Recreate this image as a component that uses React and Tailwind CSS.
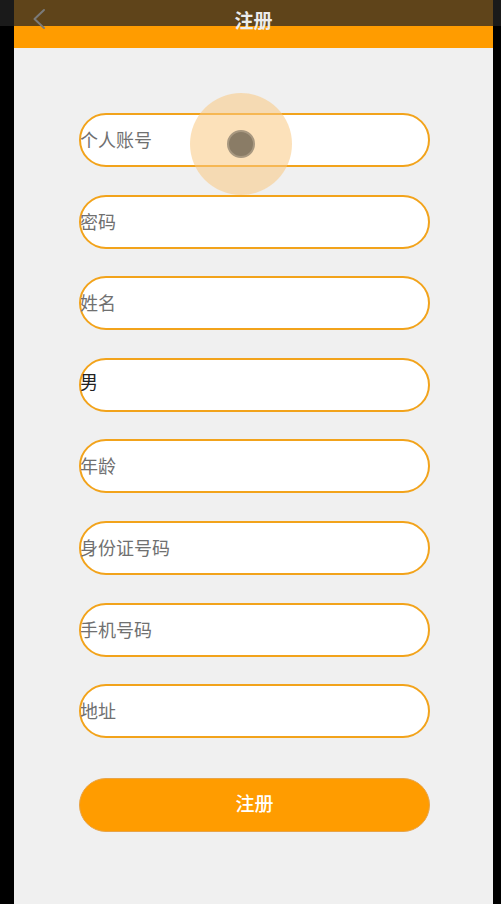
import React from 'react';

const fields = [
    { placeholder: '个人账号' },
    { placeholder: '密码' },
    { placeholder: '姓名' },
    { value: '男' },
    { placeholder: '年龄' },
    { placeholder: '身份证号码' },
    { placeholder: '手机号码' },
    { placeholder: '地址' },
];

const font = { fontFamily: '"Noto Sans CJK SC", "Liberation Sans", sans-serif' };

export default function App() {
    return (
        <div className="relative w-full h-[904px] bg-black flex justify-center overflow-hidden" style={font}>
            <div className="w-[479px] h-full bg-[#f0f0f0] flex flex-col ml-[6px]">
                {/* Header */}
                <div className="h-[48px] bg-[#ff9c00] shrink-0"></div>

                {/* Form */}
                <div className="flex flex-col gap-[27.6px] pt-[65px] pl-[65px]">
                    {fields.map((f, i) => (
                        <div
                            key={i}
                            className="w-[351px] h-[54px] rounded-full border-2 border-[#f2a31b] bg-white flex items-center"
                        >
                            {f.value ? (
                                <span className="text-[18px] leading-none text-[#222] -ml-[1px] -mt-[7px]">{f.value}</span>
                            ) : (
                                <span className="text-[18px] leading-none text-[#707070] -ml-[1px] -mt-[2px]">{f.placeholder}</span>
                            )}
                        </div>
                    ))}
                    <button className="mt-[12px] w-[351px] h-[54px] rounded-full bg-[#ff9c00] text-white text-[19px] font-medium border border-[#e8a448] leading-none pb-[4px]">
                        注册
                    </button>
                </div>
            </div>

            {/* status bar overlay */}
            <div className="absolute top-0 left-0 right-0 h-[26px] bg-[rgba(36,36,36,0.73)]"></div>
            <div className="absolute top-0 left-[14px] w-[479px] h-[40px] flex items-center justify-center">
                <svg className="absolute left-[18px] top-[8px]" width="14" height="22" viewBox="0 0 14 22" fill="none">
                    <path d="M12 2 L2.5 11 L12 20" stroke="#7a7a7a" strokeWidth="2" strokeLinecap="round" strokeLinejoin="round" />
                </svg>
                <span className="text-[19px] font-bold text-[#ececec] leading-none -mt-[1px]">注册</span>
            </div>

            {/* touch indicator */}
            <div className="absolute left-[190px] top-[93px] w-[102px] h-[102px] rounded-full bg-[rgba(250,200,130,0.55)] flex items-center justify-center">
                <div className="w-[28px] h-[28px] rounded-full bg-[#8a7c66] border-[2px] border-[#a89880]"></div>
            </div>
        </div>
    );
}
